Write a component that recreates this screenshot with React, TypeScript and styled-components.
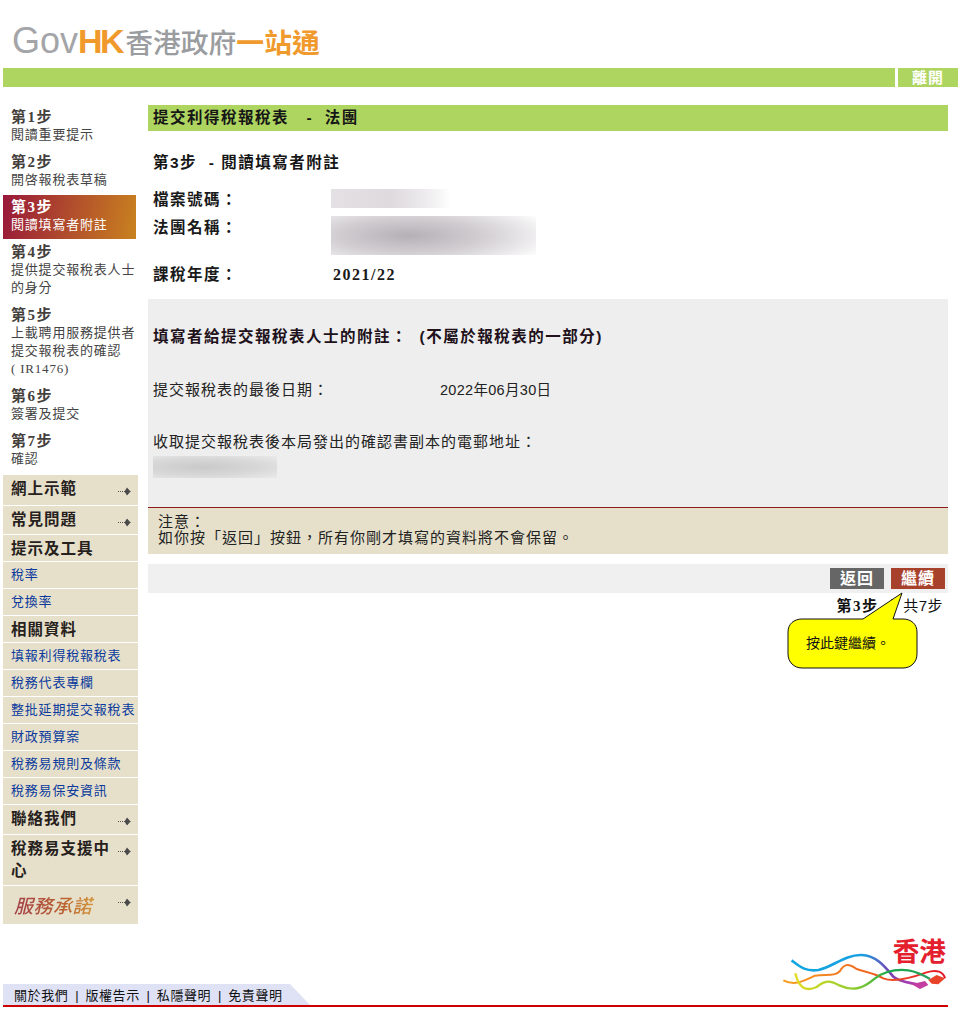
import React from 'react';
import styled, { createGlobalStyle } from 'styled-components';

const SERIF = '"Liberation Serif", "Noto Sans CJK TC", serif';
const SANS = '"Liberation Sans", "Noto Sans CJK TC", sans-serif';

const GlobalStyle = createGlobalStyle`
  html, body {
    margin: 0;
    padding: 0;
    background: #fff;
  }
  body {
    font-family: ${SANS};
    font-size: 14px;
    color: #222;
  }
`;

const Page = styled.div`
  width: 960px;
  height: 1012px;
  overflow: hidden;
  display: flex;
  flex-direction: column;
`;

const Header = styled.header`
  height: 68px;
  padding: 14px 0 0 12px;
  box-sizing: border-box;
  display: flex;
  align-items: center;
`;

const LogoLatin = styled.span<{ $orange?: boolean }>`
  font-family: "Liberation Sans", sans-serif;
  font-size: ${(p) => (p.$orange ? 34 : 36)}px;
  font-weight: ${(p) => (p.$orange ? 700 : 400)};
  letter-spacing: ${(p) => (p.$orange ? '-2.5px' : '0')};
  color: ${(p) => (p.$orange ? '#f09a2e' : '#a3a5a8')};
`;

const LogoChinese = styled.span<{ $orange?: boolean }>`
  font-family: "Noto Sans CJK TC", sans-serif;
  font-size: 27.8px;
  font-weight: ${(p) => (p.$orange ? 700 : 500)};
  color: ${(p) => (p.$orange ? '#f09a2e' : '#9a9c9f')};
  margin-left: ${(p) => (p.$orange ? '0' : '3px')};
`;

const TopBar = styled.div`
  height: 19px;
  margin: 0 2px 0 3px;
  background: #afd561;
  display: flex;
  justify-content: flex-end;
`;

const ExitLink = styled.a`
  width: 63px;
  border-left: 3px solid #fff;
  box-sizing: border-box;
  padding-left: 14px;
  color: #fff;
  font-weight: 700;
  font-size: 15px;
  line-height: 20px;
  letter-spacing: 1px;
`;

const Content = styled.div`
  display: flex;
  align-items: flex-start;
  padding: 18px 12px 0 3px;
  gap: 10px;
  position: relative;
`;

const Sidebar = styled.aside`
  width: 135px;
  flex: none;
`;

const Step = styled.div<{ $active?: boolean }>`
  width: 133px;
  box-sizing: border-box;
  padding: 3px 0 5px 8px;
  margin-bottom: 1px;
  font-family: ${SERIF};
  line-height: 18px;
  font-size: 13px;
  letter-spacing: 0.8px;
  white-space: nowrap;
  color: ${(p) => (p.$active ? '#fff' : '#444')};
  background: ${(p) => (p.$active ? 'linear-gradient(100deg, #98183a, #c9821f)' : 'none')};
`;

const StepTitle = styled.div<{ $active?: boolean }>`
  font-family: ${SERIF};
  font-weight: 700;
  font-size: 15px;
  letter-spacing: 1.5px;
  margin-bottom: 0;
  color: ${(p) => (p.$active ? '#fff' : '#44403c')};
`;

const Menu = styled.nav`
  margin-top: 2px;
  display: flex;
  flex-direction: column;
  gap: 1px;
`;

const MenuRow = styled.div<{ $height?: number }>`
  background: #e6e0cb;
  box-sizing: border-box;
  min-height: ${(p) => p.$height ?? 26}px;
  padding: 4px 2px 0 8px;
  display: flex;
  align-items: flex-start;
  justify-content: space-between;
`;

const MenuHeading = styled.span`
  font-weight: 700;
  font-size: 15.5px;
  line-height: 22px;
  letter-spacing: 1px;
  color: #26211c;
  margin-top: -1px;
`;

const MenuLink = styled.a`
  font-size: 13px;
  line-height: 18px;
  letter-spacing: 0.8px;
  color: #0b3a9c;
  white-space: nowrap;
`;

const PledgeText = styled.span`
  font-family: "Noto Sans CJK TC", sans-serif;
  font-size: 19px;
  line-height: 30px;
  letter-spacing: 0.5px;
  padding-right: 4px;
  font-weight: 500;
  font-style: italic;
  background: linear-gradient(90deg, #a5414a, #b8602f 60%, #d69a3c);
  -webkit-background-clip: text;
  background-clip: text;
  color: transparent;
  margin-left: 3px;
`;

const ArrowIcon = styled.svg`
  width: 13px;
  height: 11px;
  flex: none;
  margin: 7px 5px 0 0;
`;

const Main = styled.main`
  width: 800px;
  flex: none;
  position: relative;
`;

const TitleBar = styled.h1`
  margin: 0;
  height: 26px;
  padding-left: 5px;
  background: #afd561;
  font-size: 15.5px;
  font-weight: 700;
  line-height: 26px;
  letter-spacing: 1.5px;
  color: #161616;
  white-space: pre;
`;

const StepHeading = styled.h2`
  margin: 22px 0 0;
  padding-left: 5px;
  font-size: 15.5px;
  font-weight: 700;
  line-height: 20px;
  letter-spacing: 1.5px;
  color: #161616;
  white-space: pre;
`;

const Fields = styled.div`
  margin-top: 17px;
`;

const Field = styled.div<{ $height: number }>`
  display: grid;
  grid-template-columns: 178px 1fr;
  height: ${(p) => p.$height}px;
  padding-left: 5px;
`;

const FieldLabel = styled.div`
  font-weight: 700;
  font-size: 15.5px;
  line-height: 20px;
  letter-spacing: 1.5px;
  color: #1a1a1a;
`;

const FieldValue = styled.div`
  font-family: ${SERIF};
  font-weight: 700;
  font-size: 16px;
  line-height: 20px;
  letter-spacing: 1.5px;
  padding-left: 2px;
  color: #1a1a1a;
`;

const NumberBlur = styled.div`
  width: 120px;
  height: 19px;
  margin-top: -1px;
  background: linear-gradient(90deg, #e4e1e4 0%, #dedade 50%, #eeecee 80%, #fff 100%);
`;

const NameBlur = styled.div`
  width: 205px;
  height: 39px;
  margin-top: -2px;
  background: radial-gradient(ellipse 75% 95% at 38% 50%, #b5b0b5 0%, #d0ccd0 45%, #e8e6e8 75%, #fff 100%);
`;

const GreyPanel = styled.section`
  margin-top: 14px;
  height: 209px;
  box-sizing: border-box;
  background: #eeeeee;
  border-bottom: 1px solid #8a1c1c;
  padding: 28px 5px 0;
`;

const PanelHeading = styled.div`
  font-weight: 700;
  font-size: 15.5px;
  line-height: 20px;
  letter-spacing: 1.5px;
  color: #21111a;
  white-space: pre;
`;

const PanelLine = styled.div<{ $top: number }>`
  margin-top: ${(p) => p.$top}px;
  font-size: 15px;
  line-height: 20px;
  letter-spacing: 1px;
  color: #222;
  display: flex;
`;

const DateLabel = styled.span`
  width: 287px;
  flex: none;
`;

const DateValue = styled.span`
  letter-spacing: 0.3px;
  font-size: 14.5px;
`;

const EmailBlur = styled.div`
  width: 124px;
  height: 22px;
  margin-top: 4px;
  background: radial-gradient(ellipse at 40% 50%, #c9c9c9 0%, #d8d8d8 55%, #eaeaea 100%);
`;

const NoteBox = styled.div`
  height: 46px;
  box-sizing: border-box;
  background: #e6e0cb;
  padding: 6px 10px 0;
  font-size: 15px;
  line-height: 16px;
  letter-spacing: 1px;
  color: #222;
`;

const ActionBar = styled.div`
  margin-top: 10px;
  height: 29px;
  background: #f0f0f0;
  display: flex;
  justify-content: flex-end;
  align-items: flex-start;
  gap: 7px;
  padding: 4px 3px 0 0;
  box-sizing: border-box;
`;

const ActionButton = styled.button<{ $primary?: boolean }>`
  width: 54px;
  height: 21px;
  border: 0;
  padding: 0;
  background: ${(p) => (p.$primary ? '#a8412b' : '#666666')};
  color: #fff;
  font-family: ${SANS};
  font-size: 16px;
  font-weight: 700;
  letter-spacing: 1px;
  line-height: 21px;
`;

const StepCount = styled.div`
  margin-top: 1px;
  padding-right: 5px;
  height: 20px;
  display: flex;
  justify-content: flex-end;
  align-items: center;
  font-size: 15px;
  letter-spacing: 0.5px;
  color: #111;
`;

const StepCountStrong = styled.b`
  font-family: ${SERIF};
  letter-spacing: 1.5px;
`;

const StepCountSeparator = styled.span`
  margin: 0 10px;
`;

const Callout = styled.div`
  position: absolute;
  left: 639px;
  top: 487px;
  width: 132px;
  height: 78px;
`;

const CalloutShape = styled.svg`
  position: absolute;
  inset: 0;
  width: 132px;
  height: 78px;
`;

const CalloutText = styled.div`
  position: absolute;
  left: 19px;
  top: 41px;
  font-size: 14px;
  line-height: 20px;
  color: #111;
  white-space: nowrap;
`;

const Footer = styled.footer`
  flex: 1;
  display: flex;
  align-items: flex-end;
  position: relative;
`;

const FooterLine = styled.div`
  position: absolute;
  left: 3px;
  bottom: 5px;
  width: 945px;
  height: 2px;
  background: #cc0000;
`;

const FooterLinks = styled.div`
  margin: 0 0 7px 3px;
  width: 307px;
  height: 21px;
  box-sizing: border-box;
  padding: 1px 0 0 11px;
  background: #dfe1f5;
  clip-path: polygon(0 0, 287px 0, 100% 100%, 0 100%);
  font-size: 13px;
  line-height: 21px;
  letter-spacing: 0.6px;
  color: #111;
  display: flex;
  white-space: nowrap;
`;

const FooterSeparator = styled.span`
  width: 17px;
  text-align: center;
  letter-spacing: 0;
`;

const HkLogo = styled.svg`
  position: absolute;
  left: 780px;
  bottom: 20px;
  width: 170px;
  height: 67px;
`;

const Arrow = () => (
  <ArrowIcon viewBox="0 0 13 11">
    <path d="M0 5.5h1M2 5.5h1M4 5.5h1" stroke="#555" fill="none" />
    <path d="M6 5h6.5v1H6z" fill="#555" />
    <path d="M9 1.5l3.5 4-3.5 4-2.5-4z" fill="#4a4a4a" />
  </ArrowIcon>
);

const steps: { title: string; lines: string[] }[] = [
  { title: '第1步', lines: ['閱讀重要提示'] },
  { title: '第2步', lines: ['開啓報稅表草稿'] },
  { title: '第3步', lines: ['閱讀填寫者附註'] },
  { title: '第4步', lines: ['提供提交報稅表人士', '的身分'] },
  { title: '第5步', lines: ['上載聘用服務提供者', '提交報稅表的確認', '( IR1476)'] },
  { title: '第6步', lines: ['簽署及提交'] },
  { title: '第7步', lines: ['確認'] },
];

const links1 = ['稅率', '兌換率'];
const links2 = ['填報利得稅報稅表', '稅務代表專欄', '整批延期提交報稅表', '財政預算案', '稅務易規則及條款', '稅務易保安資訊'];
const footerLinks = ['關於我們', '版權告示', '私隱聲明', '免責聲明'];

export default function App() {
  return (
    <Page>
      <GlobalStyle />
      <Header>
        <LogoLatin>Gov</LogoLatin>
        <LogoLatin $orange>HK</LogoLatin>
        <LogoChinese>香港政府</LogoChinese>
        <LogoChinese $orange>一站通</LogoChinese>
      </Header>
      <TopBar>
        <ExitLink>離開</ExitLink>
      </TopBar>
      <Content>
        <Sidebar>
          {steps.map((s, i) => (
            <Step key={s.title} $active={i === 2}>
              <StepTitle $active={i === 2}>{s.title}</StepTitle>
              {s.lines.map((l) => (
                <div key={l}>{l}</div>
              ))}
            </Step>
          ))}
          <Menu>
            <MenuRow $height={30}>
              <MenuHeading>網上示範</MenuHeading>
              <Arrow />
            </MenuRow>
            <MenuRow $height={28}>
              <MenuHeading>常見問題</MenuHeading>
              <Arrow />
            </MenuRow>
            <MenuRow>
              <MenuHeading>提示及工具</MenuHeading>
            </MenuRow>
            {links1.map((l) => (
              <MenuRow key={l}>
                <MenuLink>{l}</MenuLink>
              </MenuRow>
            ))}
            <MenuRow>
              <MenuHeading>相關資料</MenuHeading>
            </MenuRow>
            {links2.map((l) => (
              <MenuRow key={l}>
                <MenuLink>{l}</MenuLink>
              </MenuRow>
            ))}
            <MenuRow $height={29}>
              <MenuHeading>聯絡我們</MenuHeading>
              <Arrow />
            </MenuRow>
            <MenuRow $height={50}>
              <MenuHeading>稅務易支援中心</MenuHeading>
              <Arrow />
            </MenuRow>
            <MenuRow $height={38}>
              <PledgeText>服務承諾</PledgeText>
              <Arrow />
            </MenuRow>
          </Menu>
        </Sidebar>
        <Main>
          <TitleBar>{'提交利得稅報稅表   -  法團'}</TitleBar>
          <StepHeading>{'第3步  - 閱讀填寫者附註'}</StepHeading>
          <Fields>
            <Field $height={28}>
              <FieldLabel>檔案號碼：</FieldLabel>
              <NumberBlur />
            </Field>
            <Field $height={47}>
              <FieldLabel>法團名稱：</FieldLabel>
              <NameBlur />
            </Field>
            <Field $height={20}>
              <FieldLabel>課稅年度：</FieldLabel>
              <FieldValue>2021/22</FieldValue>
            </Field>
          </Fields>
          <GreyPanel>
            <PanelHeading>{'填寫者給提交報稅表人士的附註：  (不屬於報稅表的一部分)'}</PanelHeading>
            <PanelLine $top={33}>
              <DateLabel>提交報稅表的最後日期：</DateLabel>
              <DateValue>2022年06月30日</DateValue>
            </PanelLine>
            <PanelLine $top={32}>收取提交報稅表後本局發出的確認書副本的電郵地址：</PanelLine>
            <EmailBlur />
          </GreyPanel>
          <NoteBox>
            注意：
            <br />
            如你按「返回」按鈕，所有你剛才填寫的資料將不會保留。
          </NoteBox>
          <ActionBar>
            <ActionButton>返回</ActionButton>
            <ActionButton $primary>繼續</ActionButton>
          </ActionBar>
          <StepCount>
            <StepCountStrong>第3步</StepCountStrong>
            <StepCountSeparator>/</StepCountSeparator>
            共7步
          </StepCount>
          <Callout>
            <CalloutShape viewBox="0 0 132 78">
              <path
                d="M15 27H76L115 1L106 27H116C124 27 130 32 130 40V62C130 70 124 76 116 76H15C7 76 1 70 1 62V40C1 32 7 27 15 27Z"
                fill="#ffff00"
                stroke="#111"
                strokeWidth="1"
              />
            </CalloutShape>
            <CalloutText>按此鍵繼續。</CalloutText>
          </Callout>
        </Main>
      </Content>
      <Footer>
        <FooterLine />
        <FooterLinks>
          {footerLinks.map((l, i) => (
            <React.Fragment key={l}>
              {i > 0 && <FooterSeparator>|</FooterSeparator>}
              {l}
            </React.Fragment>
          ))}
        </FooterLinks>
        <HkLogo viewBox="60 0 510 201">
          <defs>
            <linearGradient id="ribbonA" x1="0" x2="1" y1="0" y2="0">
              <stop offset="0" stopColor="#10a8e0" />
              <stop offset="0.55" stopColor="#1a9fe0" />
              <stop offset="0.75" stopColor="#7a3fb5" />
              <stop offset="1" stopColor="#c63fa8" />
            </linearGradient>
            <linearGradient id="ribbonB" x1="0" x2="1" y1="0" y2="0">
              <stop offset="0" stopColor="#f6a020" />
              <stop offset="0.5" stopColor="#f06a20" />
              <stop offset="1" stopColor="#e3142a" />
            </linearGradient>
            <linearGradient id="ribbonC" x1="0" x2="1" y1="0" y2="0">
              <stop offset="0" stopColor="#e2dc20" />
              <stop offset="0.45" stopColor="#8ccb30" />
              <stop offset="0.7" stopColor="#1aa84a" />
              <stop offset="1" stopColor="#2aa060" />
            </linearGradient>
          </defs>
          <path d="M95 106C120 125 135 140 175 135C215 128 255 88 305 90C350 92 375 125 400 155C420 172 450 172 490 182" fill="none" stroke="url(#ribbonA)" strokeWidth="8" />
          <path d="M70 166C100 182 125 172 165 152C195 146 225 156 240 138C255 112 270 118 290 132C320 142 345 145 370 160C400 172 450 160 500 142C530 132 550 140 555 160" fill="none" stroke="url(#ribbonB)" strokeWidth="6" />
          <path d="M106 145C115 185 135 202 170 186C195 165 210 165 240 182C280 200 310 190 345 160C375 138 410 132 445 136C470 140 490 150 510 162" fill="none" stroke="url(#ribbonC)" strokeWidth="7" />
          <path d="M455 178L495 168L505 180L480 192Z" fill="#c23ea0" />
          <path d="M505 165L530 150L555 160L535 178L515 176Z" fill="#e8442a" />
          <text x="398" y="108" fontFamily="Noto Sans CJK TC, sans-serif" fontSize="80" fontWeight="700" fill="#e5202e">香港</text>
        </HkLogo>
      </Footer>
    </Page>
  );
}
